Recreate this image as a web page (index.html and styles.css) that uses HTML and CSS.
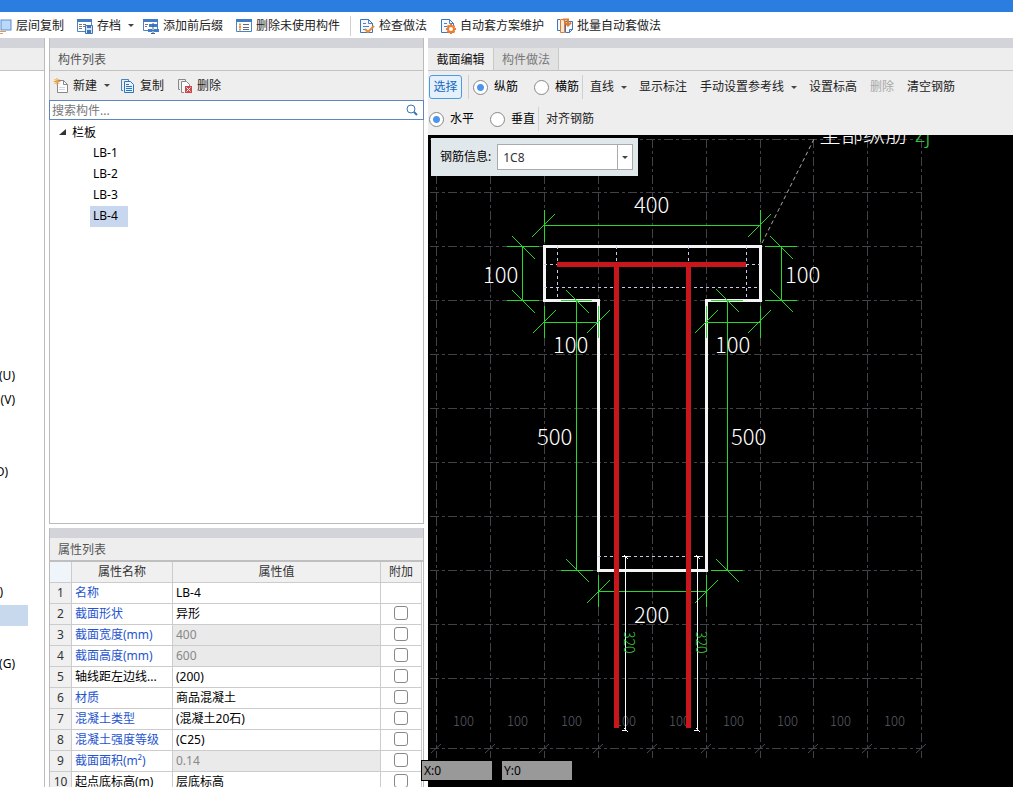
FILE: index.html
```html
<!DOCTYPE html>
<html lang="zh-CN">
<head>
<meta charset="utf-8">
<title>构件列表</title>
<link rel="stylesheet" href="styles.css">
</head>
<body>
<div class="titlebar"></div>
<nav class="ribbon">
  <button class="tool"><svg width="12" height="16"><rect x="1" y="2" width="10" height="10" fill="#b9d8fb" stroke="#5b8fce"/><path d="M0 13.500H6M0 15.500H3" stroke="#e39a55"/></svg>层间复制</button>
  <button class="tool"><svg width="16" height="16"><path d="M.5 1.500h14v12H.5z" fill="#fff" stroke="#4d82c4"/><path d="M0 1h15v3H0z" fill="#3f7cc9"/><path d="M2 6.500h3M6 6.500h3M2 8.500h3M2 10.500h3M6 8.500h2" stroke="#777"/><path d="M8.500 7.500h7v8h-7z" fill="#cfe2f8" stroke="#3f74b5"/><path d="M10 8h4v2h-4zM10 12h4v3h-4z" fill="#3f74b5"/></svg>存档<span class="caret"></span></button>
  <button class="tool after-caret"><svg width="16" height="16"><path d="M.5 1.500h14v11H.5z" fill="#fff" stroke="#4d82c4"/><path d="M0 1h15v3H0z" fill="#3f7cc9"/><path d="M2 6.500h3M2 8.500h2" stroke="#777"/><path d="M6 6h9v3H6zM5 11h4v3H5zM11 11h5v3h-5z" fill="#3f7cc9"/><path d="M10 5v11M8 15.500h4" stroke="#3b6598"/></svg>添加前后缀</button>
  <button class="tool"><svg width="16" height="16"><path d="M.5 1.500h15v12H.5z" fill="#fff" stroke="#4d82c4"/><path d="M0 1h16v3H0z" fill="#3f7cc9"/><path d="M3 6.500h2M3 9h2M3 11.500h2" stroke="#e59a3e" stroke-width="2"/><path d="M7 6.500h6M7 9.500h6M7 11.500h6" stroke="#5d6c7e"/></svg>删除未使用构件</button>
  <span class="rule"></span>
  <button class="tool after-rule"><svg width="16" height="16"><path d="M1.500 1.500h8l4 4v9h-12z" fill="#f4f9ff" stroke="#3f76b8"/><path d="M9.500 1v4.500H14M4 5.500h3M4 8.500h6M4 11.500h3" fill="none" stroke="#4d82c4"/><path d="M6 11l3 3 6-6" fill="none" stroke="#e68a3c" stroke-width="2"/></svg>检查做法</button>
  <button class="tool"><svg width="16" height="16"><path d="M1.500 1.500h8l4 4v9h-12z" fill="#f4f9ff" stroke="#3f76b8"/><path d="M9.500 1v4.500H14M4 5.500h3M4 8.500h3" fill="none" stroke="#4d82c4"/><circle cx="11" cy="11" r="3" fill="#fff" stroke="#ed7d31" stroke-width="2"/><path d="M11 6v2M11 14v2M6 11h2M14 11h2M7.500 7.500l1 1M13.500 13.500l1 1M7.500 14.500l1-1M13.500 8.500l1-1" stroke="#ed7d31" stroke-width="2"/></svg>自动套方案维护</button>
  <button class="tool"><svg width="16" height="16"><path d="M3 1.500H.5v11H3M8.500 3.500h7v8l-3 3h-4z" fill="#f4f9ff" stroke="#3f76b8"/><path d="M12.500 14.500v-3h3" fill="none" stroke="#3f76b8"/><path d="M3.500 1.500h4v13h-4z" fill="#fde7d3" stroke="#e07b35"/><path d="M6 1.500h5v5M8 4.500l3 3 3-3" fill="none" stroke="#e07b35" stroke-width="2"/></svg>批量自动套做法</button>
</nav>

<main class="workspace">
  <aside class="side">
    <div class="strip"></div>
    <div class="caption"></div>
    <ul class="module-list">
      <li class="w-letter">(U)</li>
      <li class="w-letter">(V)</li>
      <li></li><li></li>
      <li class="w-half">D)</li>
      <li></li><li></li><li></li><li></li>
      <li class="w-edge">)</li>
      <li class="current"></li>
      <li></li>
      <li class="w-letter">(G)</li>
    </ul>
  </aside>

  <div class="middle">
    <section class="panel components">
      <div class="strip"></div>
      <h2 class="caption">构件列表</h2>
      <div class="panel-tools">
        <button class="tool"><svg width="16" height="16"><path d="M4.500 2.500h6l4 4v8h-10z" fill="#fff" stroke="#888"/><path d="M10.500 2.500v4h4" fill="none" stroke="#888"/><path d="M6 9.500h6M6 11.500h6" stroke="#d5d5e5"/><path d="M4 0v7M.5 3.500h7M1.500 1l5 5M6.500 1l-5 5" stroke="#efa03c"/></svg>新建<span class="caret"></span></button>
        <button class="tool"><svg width="16" height="16"><path d="M3 12.500H1.500v-11h7V3" fill="none" stroke="#4a83b8"/><path d="M4.500 3.500h6l3 3v8h-9z" fill="#e5f2ff" stroke="#2f75b5"/><path d="M6 6.500h3M6 8.500h6M6 10.500h6M6 12.500h6" stroke="#2f75b5"/></svg>复制</button>
        <button class="tool"><svg width="16" height="16"><path d="M3 11.500H1.500v-10h7V3" fill="none" stroke="#888"/><path d="M7 14.500H4.500v-11h5l3 3V8" fill="#fafafa" stroke="#888"/><path d="M8 8h7v7H8z" fill="#c9474d"/><path d="M9.500 9.500l4 4M13.500 9.500l-4 4" stroke="#fff"/></svg>删除</button>
      </div>
      <label class="search">
        <input type="text" placeholder="搜索构件..." aria-label="搜索构件">
        <svg width="12" height="12"><circle cx="5" cy="5" r="4" fill="none" stroke="#3576b3"/><path d="M8 8l3 3" stroke="#3576b3" stroke-width="2"/></svg>
      </label>
      <div class="tree">
        <div class="tree-root"><svg width="7" height="7"><path d="M7 0v6H0z" fill="#333"/></svg>栏板</div>
        <ul class="tree-items">
          <li><span>LB-1</span></li>
          <li><span>LB-2</span></li>
          <li><span>LB-3</span></li>
          <li><span class="selected">LB-4</span></li>
        </ul>
      </div>
    </section>

    <section class="panel properties">
      <div class="strip"></div>
      <h2 class="caption">属性列表</h2>
      <table class="grid">
        <colgroup><col class="c-num"><col class="c-name"><col><col class="c-add"></colgroup>
        <thead><tr><th></th><th>属性名称</th><th>属性值</th><th>附加</th></tr></thead>
        <tbody>
          <tr><th>1</th><td class="link">名称</td><td>LB-4</td><td></td></tr>
          <tr><th>2</th><td class="link">截面形状</td><td>异形</td><td><input type="checkbox" aria-label="附加 截面形状"></td></tr>
          <tr><th>3</th><td class="link">截面宽度(mm)</td><td class="locked">400</td><td><input type="checkbox" aria-label="附加 截面宽度"></td></tr>
          <tr><th>4</th><td class="link">截面高度(mm)</td><td class="locked">600</td><td><input type="checkbox" aria-label="附加 截面高度"></td></tr>
          <tr><th>5</th><td>轴线距左边线...</td><td>(200)</td><td><input type="checkbox" aria-label="附加 轴线距左边线"></td></tr>
          <tr><th>6</th><td class="link">材质</td><td>商品混凝土</td><td><input type="checkbox" aria-label="附加 材质"></td></tr>
          <tr><th>7</th><td class="link">混凝土类型</td><td>(混凝土20石)</td><td><input type="checkbox" aria-label="附加 混凝土类型"></td></tr>
          <tr><th>8</th><td class="link">混凝土强度等级</td><td>(C25)</td><td><input type="checkbox" aria-label="附加 混凝土强度等级"></td></tr>
          <tr><th>9</th><td class="link">截面面积(m²)</td><td class="locked">0.14</td><td><input type="checkbox" aria-label="附加 截面面积"></td></tr>
          <tr><th>10</th><td>起点底标高(m)</td><td>层底标高</td><td><input type="checkbox" aria-label="附加 起点底标高"></td></tr>
        </tbody>
      </table>
    </section>
  </div>

  <section class="editor">
    <div class="strip"></div>
    <div class="tabs">
      <button class="tab active">截面编辑</button><button class="tab">构件做法</button>
    </div>
    <div class="edit-tools">
      <div class="tool-row">
        <button class="pick">选择</button>
        <span class="rule"></span>
        <label class="radio"><input type="radio" name="bar" checked>纵筋</label>
        <label class="radio"><input type="radio" name="bar">横筋</label>
        <span class="rule tight"></span>
        <button class="tool">直线<span class="caret"></span></button>
        <button class="tool">显示标注</button>
        <button class="tool">手动设置参考线<span class="caret"></span></button>
        <button class="tool">设置标高</button>
        <button class="tool" disabled>删除</button>
        <button class="tool">清空钢筋</button>
      </div>
      <div class="tool-row">
        <label class="radio"><input type="radio" name="dir" checked>水平</label>
        <label class="radio"><input type="radio" name="dir">垂直</label>
        <span class="rule tight"></span>
        <button class="tool">对齐钢筋</button>
      </div>
    </div>
    <div class="canvas">
      <svg class="drawing" width="585" height="652" viewBox="428 135 585 652">
        <g class="axis">
          <path d="M436.500 139V758M490.500 139V758M544.500 139V758M598.500 139V758M652.500 139V758M706.500 139V758M760.500 139V758M813.500 139V758M867.500 139V758M921.500 139V758"/>
          <path d="M430 139.500H922M430 192.500H922M430 246.500H922M430 300.500H922M430 354.500H922M430 408.500H922M430 462.500H922M430 516.500H922M430 570.500H922M430 624.500H922M430 678.500H922M430 748.500H922"/>
        </g>
        <path class="axis-tick" d="M431 753l10-9M485 753l10-9M539 753l10-9M593 753l10-9M647 753l10-9M701 753l10-9M755 753l10-9M808 753l10-9M862 753l10-9M916 753l10-9"/>
        <g class="axis-text">
          <text x="453" y="726">100</text><text x="507" y="726">100</text><text x="561" y="726">100</text><text x="615" y="726">100</text><text x="669" y="726">100</text><text x="723" y="726">100</text><text x="777" y="726">100</text><text x="830" y="726">100</text><text x="884" y="726">100</text>
        </g>
        <path class="outline" d="M544.500 246.500H760.500V300.500H706.500V570.500H598.500V300.500H544.500Z"/>
        <path class="cover" d="M557.500 246V300M746.500 246V300M616.500 246V264M688.500 246V264M544 264.500H557M746 264.500H760M544 287.500H760M598 556.500H706"/>
        <g class="dim">
          <path d="M544.500 225.500H760.500M544.500 210V242M760.500 210V242"/>
          <path d="M522.500 246V300M507 246.500H539M507 300.500H539M781.500 246V300M765 246.500H797M765 300.500H797"/>
          <path d="M544 322.500H598M544.500 306V338M598.500 306V338M706 322.500H760M706.500 306V338M760.500 306V338"/>
          <path d="M576.500 300V570M561 300.500H592M561 570.500H593M727.500 300V570M711 300.500H743M711 570.500H743"/>
          <path d="M598 591.500H706M598.500 575V607M706.500 575V607"/>
        </g>
        <path class="slash" d="M532 237l23-23M748 237l23-23M512 236l23 23M512 290l23 23M770 236l23 23M770 289l23 23M533 333l23-23M587 333l23-23M695 333l23-23M748 333l23-23M566 290l23 23M566 559l23 23M716 289l23 23M716 559l23 23M587 603l23-23M695 603l23-23"/>
        <path class="rebar" d="M557 264.500H746M616.500 264V728M688.500 264V728"/>
        <path class="anchor" d="M625.500 556V730M697.500 556V730M622 556.500h6M694 556.500h6M622 730.500h5M694 730.500h5M624 728l4 4M696 728l4 4M624 555l4 4M696 555l4 4"/>
        <path class="leader" d="M762 243L814 139"/>
        <g class="dim-text">
          <text x="634" y="213">400</text><text x="483" y="283">100</text><text x="785" y="283">100</text><text x="553" y="353">100</text><text x="715" y="353">100</text><text x="537" y="445">500</text><text x="731" y="445">500</text><text x="634" y="623">200</text>
        </g>
        <g class="bar-text">
          <text transform="translate(624 631) rotate(90)">320</text><text transform="translate(696 631) rotate(90)">320</text>
        </g>
        <text class="note" x="819" y="142">全部纵筋<tspan class="note-code" x="915">zj</tspan></text>
      </svg>
      <div class="info">
        <label for="rebar-info">钢筋信息:</label>
        <div class="combo"><input id="rebar-info" type="text" value="1C8"><button aria-label="展开"><span class="caret"></span></button></div>
      </div>
      <div class="coords"><output>X:0</output><output>Y:0</output></div>
    </div>
  </section>
</main>
</body>
</html>
```
FILE: styles.css
```css
* { box-sizing: border-box; }

body {
  margin: 0;
  height: 100vh;
  display: flex;
  flex-direction: column;
  overflow: hidden;
  background: #fff;
  color: #000;
  font: 12px/20px "Noto Sans", "Noto Sans CJK SC", sans-serif;
}

button, input {
  font: inherit;
  color: inherit;
  margin: 0;
}

button {
  border: 0;
  padding: 0;
  background: none;
  white-space: nowrap;
}

ul { list-style: none; margin: 0; padding: 0; }
svg { display: block; flex: none; }

.titlebar { flex: 0 0 12px; background: #2b7ee0; }

.ribbon {
  flex: 0 0 26px;
  display: flex;
  align-items: center;
  gap: 13px;
  padding-top: 1px;
  overflow: hidden;
  color: #222;
}

.tool { display: flex; align-items: center; gap: 4px; }
.tool:disabled { color: #a8a8a8; }
.ribbon .after-caret { margin-left: -5px; }
.ribbon .rule { height: 20px; margin: 0 -5px 0 -3px; }

.caret {
  border: 3px solid transparent;
  border-top-color: #444;
  border-bottom: 0;
  margin: 0 1px 0 3px;
}

.rule { width: 1px; background: #d0d0d0; flex: none; }

.workspace { flex: 1; min-height: 0; display: flex; }

.strip { flex: 0 0 10px; background: #d3d4da; }

.caption {
  flex: 0 0 23px;
  margin: 0;
  padding: 2px 8px 0;
  background: #eee;
  border-bottom: 1px solid #c3c3c3;
  color: #555;
  font-size: 12px;
  font-weight: 400;
}

.side {
  flex: 0 0 45px;
  display: flex;
  flex-direction: column;
  border-right: 1px solid #bbb;
  overflow: hidden;
}

.module-list { padding-top: 293px; }
.module-list li {
  height: 24px;
  display: flex;
  align-items: center;
  justify-content: flex-end;
}
.w-letter { width: 15px; }
.w-half { width: 8px; }
.w-edge { width: 3px; }
.module-list .current { width: 28px; height: 21px; margin: 1px 0 2px; background: #c8d9ee; }

.middle {
  flex: 0 0 375px;
  margin: 0 4px;
  display: flex;
  flex-direction: column;
  gap: 4px;
}

.panel { display: flex; flex-direction: column; border: 1px solid #bbb; border-top: 0; }
.components { flex: 1; min-height: 0; }

.panel-tools {
  flex: 0 0 29px;
  display: flex;
  align-items: center;
  gap: 13px;
  padding-left: 3px;
  background: #eee;
  color: #222;
}
.panel-tools .caret { margin: 0 -3px 0 3px; }

.search {
  flex: 0 0 20px;
  display: flex;
  align-items: center;
  margin: 0 -1px;
  padding: 0 5px 0 2px;
  border: 1px solid #5f86bd;
}
.search input { flex: 1; min-width: 0; height: 18px; padding: 1px 0 0; border: 0; outline: 0; }
.search input::placeholder { color: #777; opacity: 1; }

.tree { flex: 1; padding-top: 2px; }
.tree-root { display: flex; align-items: center; gap: 6px; height: 21px; padding-left: 9px; }
.tree-items { padding-left: 40px; }
.tree-items li { height: 21px; display: flex; }
.tree-items span { width: 38px; padding-left: 3px; }
.tree-items .selected { background: #c8d7ee; }

.properties { flex: 0 0 259px; overflow: hidden; border-bottom: 0; }
.properties .caption { flex-basis: 24px; border-bottom: 2px solid #bfbfbf; }

.grid {
  width: 372px;
  table-layout: fixed;
  border-collapse: separate;
  border-spacing: 0;
}
.c-num { width: 22px; }
.c-name { width: 101px; }
.c-add { width: 41px; }
.grid th, .grid td {
  height: 21px;
  padding: 0 3px;
  border-right: 1px solid #ccc;
  border-bottom: 1px solid #ccc;
  font-weight: 400;
  text-align: left;
  white-space: nowrap;
}
.grid th { background: #f0f0f0; color: #333; text-align: center; padding: 0; }
.grid thead th:first-child { background: #f0f5fc; }
.grid .link { color: #1f55cf; }
.grid .locked { background: #eaeaea; color: #888; }
.grid td:last-child { text-align: center; padding: 0; }

.grid input {
  appearance: none;
  display: block;
  width: 14px;
  height: 14px;
  margin: 0 auto 3px;
  border: 1px solid #888;
  border-radius: 3px;
  background: #fff;
}

.editor { flex: 1; min-width: 0; display: flex; flex-direction: column; }

.tabs { flex: 0 0 23px; display: flex; background: #eee; border-bottom: 1px solid #c3c3c3; }
.tab { width: 65px; padding-top: 2px; border-right: 1px solid #c8c8c8; background: #e2e2e2; color: #777; }
.tab.active { width: 66px; background: #eee; color: #111; }

.edit-tools { flex: 0 0 64px; background: #eee; padding-left: 1px; color: #222; }
.tool-row { height: 32px; display: flex; align-items: center; }
.tool-row .rule { height: 24px; margin: 0 4px 0 6px; }
.tool-row .rule.tight { margin: 0 7px 0 3px; }
.tool-row .tool { margin-right: 13px; }
.tool-row .caret { margin-right: -1px; }

.pick {
  width: 33px;
  height: 24px;
  border: 1px solid #4b9be4;
  border-radius: 3px;
  background: #e4f1fd;
  color: #1768bd;
}

.radio { display: flex; align-items: center; gap: 6px; margin-right: 16px; color: #000; }
.radio:has(+ .tight) { margin-right: 0; }
.radio input {
  appearance: none;
  width: 15px;
  height: 15px;
  border: 1px solid #888;
  border-radius: 50%;
  background: #fff;
}
.radio input:checked { background: radial-gradient(circle, #4b95ec 3px, #fff 4px); }

.canvas { flex: 1; min-height: 0; position: relative; background: #000; }
.drawing { position: absolute; left: 0; top: 0; }
.drawing path { fill: none; }

.axis path { stroke: #414147; stroke-dasharray: 9 3 3 3; }
.axis-tick { stroke: #4a4a52; }
.axis-text { fill: #5c5c66; font: 300 13px "Noto Sans CJK SC", sans-serif; }
.outline { stroke: #f4f4f4; stroke-width: 3; }
.cover { stroke: #c4cbe6; stroke-dasharray: 3 3; }
.dim path { stroke: #27d82b; }
.slash { stroke: #27d82b; shape-rendering: crispEdges; }
.rebar { stroke: #c8161d; stroke-width: 5; }
.anchor { stroke: #fff; }
.leader { stroke: #aaa; stroke-dasharray: 4 3; }
.dim-text { fill: #fff; font: 300 22px "Noto Sans CJK SC", sans-serif; }
.bar-text { fill: #3bd53e; font: 300 14px "Noto Sans CJK SC", sans-serif; }
.note { fill: #fff; font: 300 22px "Noto Sans CJK SC", sans-serif; }
.note-code { fill: #35c23b; }

.info {
  position: absolute;
  left: 3px;
  top: 3px;
  display: flex;
  align-items: center;
  gap: 6px;
  padding: 6px 5px 6px 9px;
  background: #e1e8eb;
}
.combo { display: flex; width: 136px; height: 26px; border: 1px solid #aaa; background: #fff; }
.combo input { flex: 1; min-width: 0; padding: 2px 5px 0; border: 0; outline: 0; background: none; color: #333; }
.combo button { width: 15px; border-left: 1px solid #aaa; display: flex; align-items: center; justify-content: center; }
.combo .caret { margin: 0; }

.coords { position: absolute; left: -7px; bottom: 6px; display: flex; gap: 8px; }
.coords output { width: 72px; height: 21px; padding-left: 2px; border: 1px solid #000; background: #999; line-height: 19px; }
```
